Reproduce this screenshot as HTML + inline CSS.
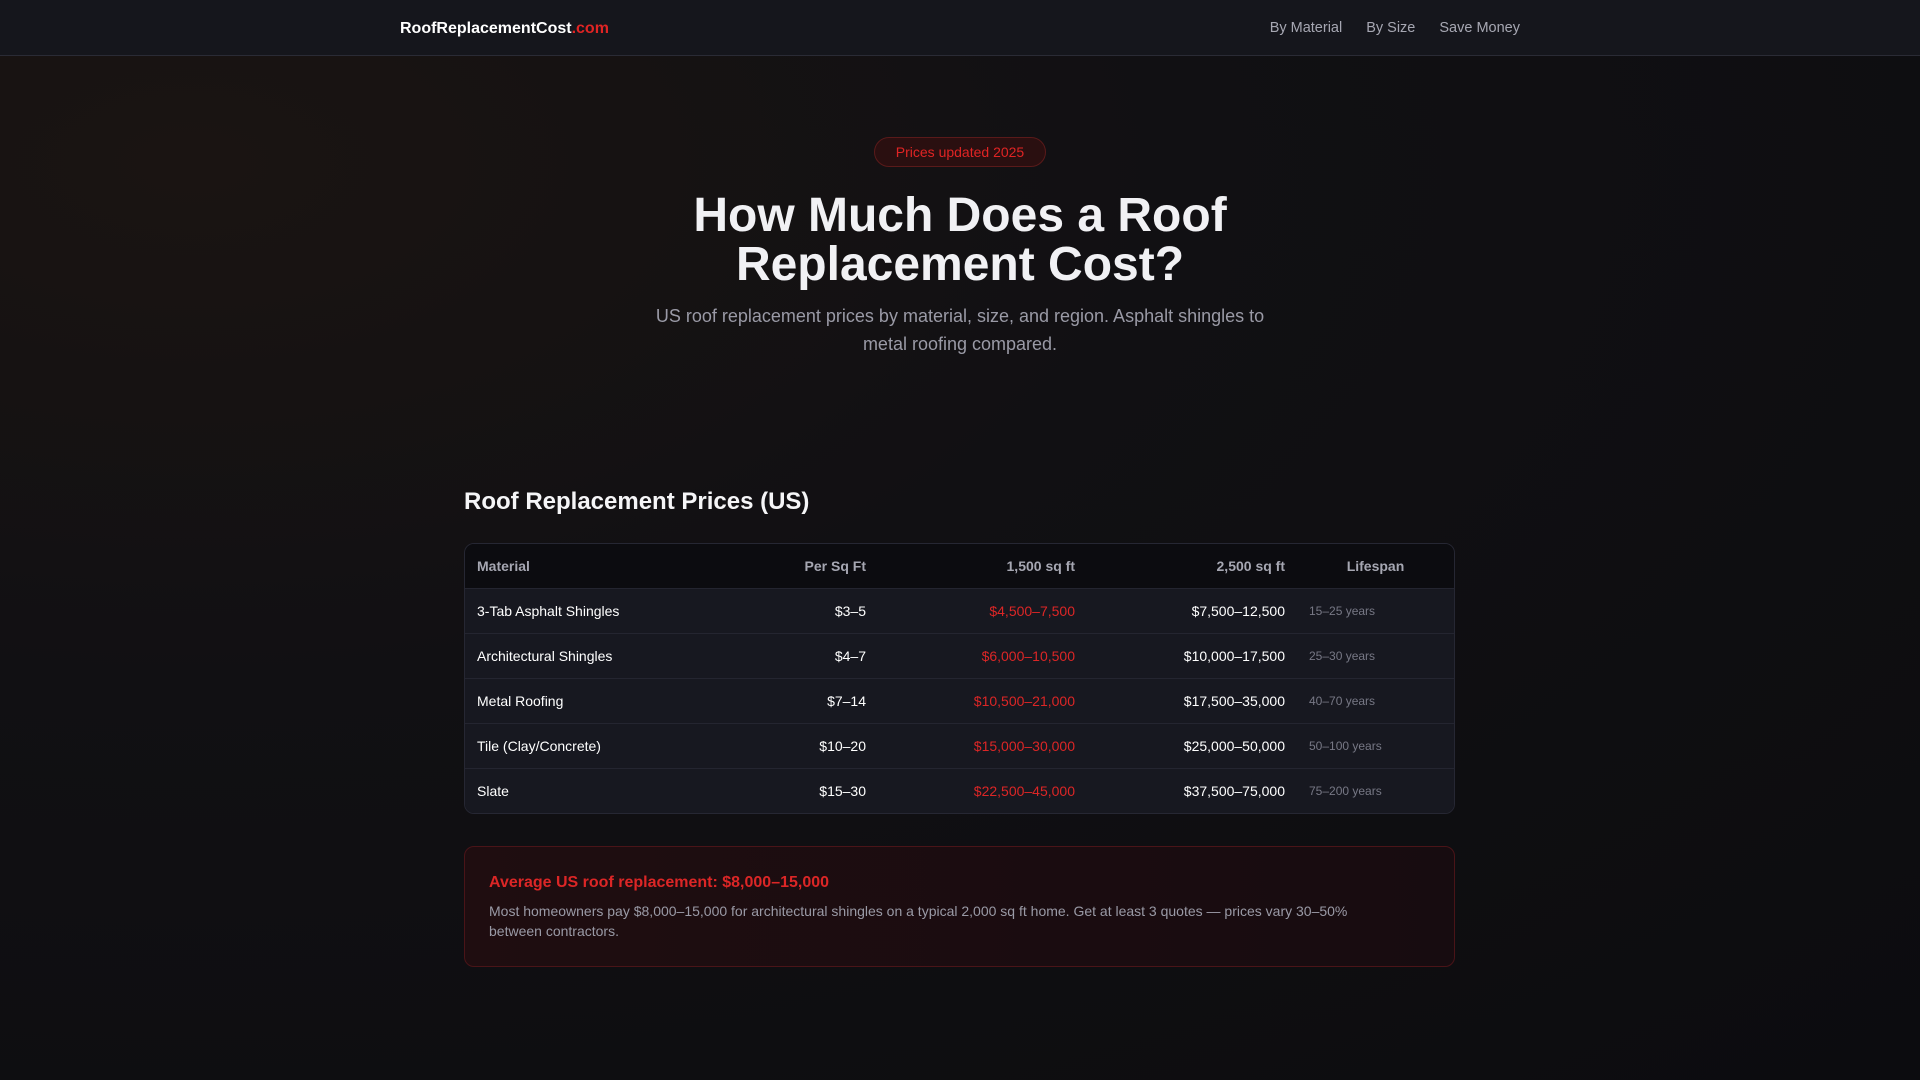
<!DOCTYPE html>
<html><head><meta charset="utf-8">
<style>
*{margin:0;padding:0;box-sizing:border-box}
body{width:1920px;height:1080px;overflow:hidden;font-family:"Liberation Sans",sans-serif;color:#f2f2f5;
background:radial-gradient(ellipse at 10% 15%,#1a1412 0%,#111013 40%,#0c0c0f 100%);}
nav{height:56px;background:#15161c;border-bottom:1px solid #2a2b35;position:relative}
.logo{position:absolute;left:400px;top:20px;font-size:16px;font-weight:bold;color:#fff}
.logo span{color:#e02424}
.links{position:absolute;right:400px;top:20px;font-size:14.5px;color:#a6a7b2}
.links span{margin-left:24px}
.badge{position:absolute;left:874px;top:137px;width:172px;height:30px;border:1px solid #5a1a1a;background:#2a0f10;border-radius:15px;color:#e02424;font-size:14px;text-align:center;line-height:28px}
h1{position:absolute;left:0;width:1920px;top:191px;text-align:center;font-size:48px;line-height:49px;font-weight:bold;color:#f1f1f4}
.sub{position:absolute;left:645px;width:630px;top:302px;text-align:center;font-size:18px;line-height:28px;color:#9a9aa6}
h2{position:absolute;left:464px;top:488px;font-size:24px;font-weight:bold;color:#f5f5f7}
table{position:absolute;left:464px;top:543px;width:991px;border:1px solid #262733;border-radius:10px;border-collapse:separate;border-spacing:0;overflow:hidden;font-size:14px}
th{height:44px;background:#0c0c10;color:#a6a7b2;font-weight:bold;font-size:14px}
td{height:45px;background:#171820;border-top:1px solid #242530;color:#fff}
th,td{padding:0 12px}
.l{text-align:left}.r{text-align:right}
td.red{color:#dc2626}
td.life{color:#777885;font-size:12px;padding-left:12px}
.call{position:absolute;left:464px;top:846px;width:991px;height:121px;border:1px solid #4a1418;border-radius:10px;background:linear-gradient(90deg,#1f0d10,#170c10);padding:27px 24px}
.call h3{font-size:16px;color:#dc2626;font-weight:bold;margin-bottom:9px}
.call p{font-size:14px;line-height:20px;color:#9a9aa6;padding-right:40px}
</style></head><body>
<nav><div class="logo">RoofReplacementCost<span>.com</span></div>
<div class="links"><span>By Material</span><span>By Size</span><span>Save Money</span></div></nav>
<div class="badge">Prices updated 2025</div>
<h1>How Much Does a Roof<br>Replacement Cost?</h1>
<div class="sub">US roof replacement prices by material, size, and region. Asphalt shingles to metal roofing compared.</div>
<h2>Roof Replacement Prices (US)</h2>
<table>
<colgroup><col style="width:293px"><col style="width:120px"><col style="width:209px"><col style="width:210px"><col></colgroup>
<tr><th class="l">Material</th><th class="r">Per Sq Ft</th><th class="r">1,500 sq ft</th><th class="r">2,500 sq ft</th><th>Lifespan</th></tr>
<tr><td>3-Tab Asphalt Shingles</td><td class="r">$3–5</td><td class="r red">$4,500–7,500</td><td class="r">$7,500–12,500</td><td class="life">15–25 years</td></tr>
<tr><td>Architectural Shingles</td><td class="r">$4–7</td><td class="r red">$6,000–10,500</td><td class="r">$10,000–17,500</td><td class="life">25–30 years</td></tr>
<tr><td>Metal Roofing</td><td class="r">$7–14</td><td class="r red">$10,500–21,000</td><td class="r">$17,500–35,000</td><td class="life">40–70 years</td></tr>
<tr><td>Tile (Clay/Concrete)</td><td class="r">$10–20</td><td class="r red">$15,000–30,000</td><td class="r">$25,000–50,000</td><td class="life">50–100 years</td></tr>
<tr><td>Slate</td><td class="r">$15–30</td><td class="r red">$22,500–45,000</td><td class="r">$37,500–75,000</td><td class="life">75–200 years</td></tr>
</table>
<div class="call"><h3>Average US roof replacement: $8,000–15,000</h3>
<p>Most homeowners pay $8,000–15,000 for architectural shingles on a typical 2,000 sq ft home. Get at least 3 quotes — prices vary 30–50% between contractors.</p></div>
</body></html>
